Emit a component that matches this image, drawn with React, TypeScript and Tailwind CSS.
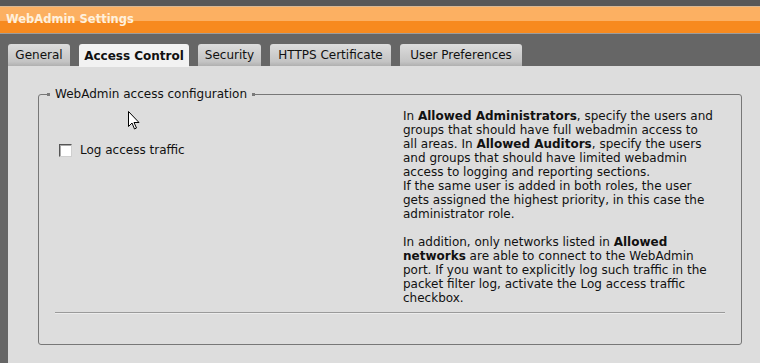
import React from "react";

const tabs = [
  { label: "General", width: "w-[62px]" },
  { label: "Access Control", width: "w-[110px]", active: true },
  { label: "Security", width: "w-[63px]" },
  { label: "HTTPS Certificate", width: "w-[121px]" },
  { label: "User Preferences", width: "w-[122px]" },
];

function Dot() {
  return <span className="inline-block w-[3px] h-[3px] bg-[#7a7a7a] align-middle" />;
}

export default function App() {
  return (
    <div className="relative w-[760px] h-[363px] overflow-hidden bg-[#666666] font-['DejaVu_Sans',Verdana,sans-serif] text-[12px] text-[#111]">
      {/* header */}
      <div className="h-[6px] bg-[#585858]" />
      <div className="h-px bg-[#d8b894]" />
      <div className="h-[26px] bg-[linear-gradient(#fcb062_0,#fcb062_52%,#f78a1f_52%,#f78a1f_100%)] flex items-center pl-[6px]">
        <span className="font-bold text-[11.5px] text-[#fff0dc]">WebAdmin Settings</span>
      </div>
      <div className="h-px bg-[#9c9c9c]" />

      {/* tabs */}
      <div className="flex gap-[9px] pl-[8px] pt-[10px] h-[32px]">
        {tabs.map((t) => (
          <div
            key={t.label}
            className={`${t.width} h-[22px] rounded-t-[3px] flex items-center justify-center ${
              t.active
                ? "bg-[#f2f2f2] font-bold h-[23px]"
                : "bg-[linear-gradient(#dcdcdc,#c4c4c4_80%,#b0b0b0)]"
            }`}
          >
            {t.label}
          </div>
        ))}
      </div>

      {/* panel */}
      <div className="ml-[8px] h-[300px] bg-[#dddddd] pt-[21px] pl-[30px]">
        <fieldset className="w-[704px] border border-[#777] rounded-[3px] px-0">
          <legend className="ml-[8px] px-0 flex items-center gap-[4px] leading-[14px]">
            <Dot />
            <span className="px-[1px]">WebAdmin access configuration</span>
            <Dot />
          </legend>
          <div className="grid grid-cols-[364px_1fr] pt-[8px]">
            <div className="pt-[34px] pl-[20px]">
              <label className="flex items-center gap-[8px] leading-[14px]">
                <span className="w-[13px] h-[13px] bg-white border border-[#555] border-r-[#cfcfcf] border-b-[#cfcfcf] shadow-[inset_1px_1px_0_#aaa]" />
                <span>Log access traffic</span>
              </label>
            </div>
            <div className="leading-[14px] whitespace-nowrap">
              <p>
                In <b>Allowed Administrators</b>, specify the users and
                <br />
                groups that should have full webadmin access to
                <br />
                all areas. In <b>Allowed Auditors</b>, specify the users
                <br />
                and groups that should have limited webadmin
                <br />
                access to logging and reporting sections.
                <br />
                If the same user is added in both roles, the user
                <br />
                gets assigned the highest priority, in this case the
                <br />
                administrator role.
              </p>
              <p className="mt-[14px]">
                In addition, only networks listed in <b>Allowed</b>
                <br />
                <b>networks</b> are able to connect to the WebAdmin
                <br />
                port. If you want to explicitly log such traffic in the
                <br />
                packet filter log, activate the Log access traffic
                <br />
                checkbox.
              </p>
            </div>
          </div>
          <div className="mx-[16px] mt-[7px] mb-[30px] h-px bg-[#9a9a9a] border-b border-[#ececec] box-content" />
        </fieldset>
      </div>

      {/* mouse pointer */}
      <svg className="absolute left-[128px] top-[111px]" width="12" height="20" viewBox="0 0 12 20">
        <path
          d="M0.5 0.5 L0.5 15.5 L4 12 L6.5 18 L8.5 17 L6 11.5 L11 11.5 Z"
          fill="#fff"
          stroke="#000"
          strokeWidth="1"
          strokeLinejoin="miter"
        />
      </svg>
    </div>
  );
}
